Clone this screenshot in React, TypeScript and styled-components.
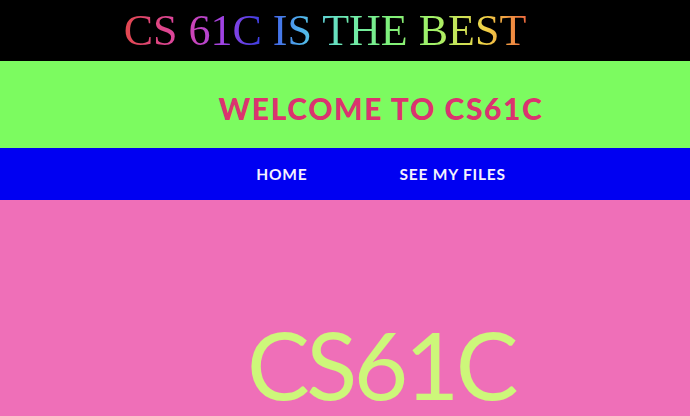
import React from "react";
import styled, { createGlobalStyle } from "styled-components";

const Global = createGlobalStyle`
  html, body { margin: 0; padding: 0; background: #ef6fb8; }
  body { overflow: hidden; }
`;

const Page = styled.div`
  display: flex;
  flex-direction: column;
  width: 690px;
  height: 416px;
  overflow: hidden;
`;

const TopBar = styled.header`
  background: #000;
  height: 61px;
  display: flex;
  align-items: center;
  justify-content: center;
  padding-right: 40px;
`;

const Rainbow = styled.h1`
  margin: 0;
  font-family: "Liberation Serif", "Times New Roman", serif;
  font-weight: normal;
  font-size: 44px;
  line-height: 1;
  background: linear-gradient(
    90deg,
    #e2474c 0%,
    #dc45a6 14%,
    #a443e2 24%,
    #3c3fe4 34%,
    #4fb2ee 44%,
    #6be8b8 54%,
    #7ef07a 66%,
    #a6f066 78%,
    #f2d146 90%,
    #ee6a3e 100%
  );
  -webkit-background-clip: text;
  background-clip: text;
  color: transparent;
`;

const Band = styled.section`
  background: #7cfb60;
  height: 87px;
  display: flex;
  align-items: center;
  justify-content: center;
  padding-left: 72px;
`;

const Welcome = styled.h2`
  margin: 0;
  padding-top: 6px;
  font-family: "Comic Sans MS", "Lato", sans-serif;
  font-weight: 900;
  font-size: 30px;
  color: #db336f;
  letter-spacing: 1.6px;
`;

const Nav = styled.nav`
  background: #0000f2;
  height: 52px;
  display: flex;
  align-items: center;
  justify-content: center;
  gap: 92px;
  padding-left: 72px;
`;

const NavLink = styled.a`
  font-family: "Comic Sans MS", "Lato", sans-serif;
  font-size: 15.5px;
  font-weight: 700;
  color: #f4f2ff;
  text-decoration: none;
  letter-spacing: 0.8px;
`;

const Main = styled.main`
  flex: 1;
  background: #ef6fb8;
  display: flex;
  justify-content: center;
  padding-left: 72px;
  padding-top: 126px;
`;

const Big = styled.div`
  font-family: "Comic Sans MS", "Lato", sans-serif;
  font-size: 94px;
  font-weight: 400;
  line-height: 0.8;
  letter-spacing: -3.5px;
  color: #cdf77a;
`;

export default function App() {
  return (
    <Page>
      <Global />
      <TopBar>
        <Rainbow>CS 61C IS THE BEST</Rainbow>
      </TopBar>
      <Band>
        <Welcome>WELCOME TO CS61C</Welcome>
      </Band>
      <Nav>
        <NavLink href="#">HOME</NavLink>
        <NavLink href="#">SEE MY FILES</NavLink>
      </Nav>
      <Main>
        <Big>CS61C</Big>
      </Main>
    </Page>
  );
}
